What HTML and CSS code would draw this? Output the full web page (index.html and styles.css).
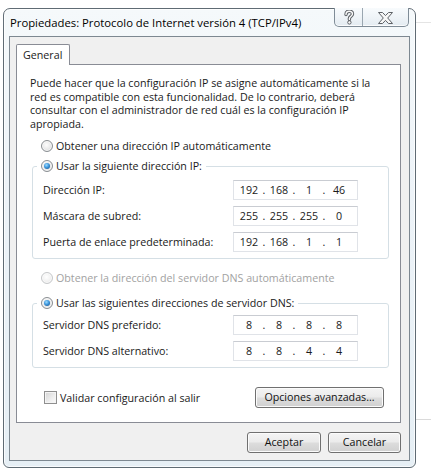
FILE: index.html
```html
<!DOCTYPE html>
<html lang="es">
<head>
<meta charset="utf-8">
<title>Propiedades: Protocolo de Internet versión 4 (TCP/IPv4)</title>
<link rel="stylesheet" href="styles.css">
</head>
<body>
<div class="screen">
  <div class="window">
    <div class="titlebar">
      <span class="title">Propiedades: Protocolo de Internet versión 4 (TCP/IPv4)</span>
      <div class="caption-btns">
        <span class="cap cap-help">
          <svg width="12" height="15" viewBox="0 0 12 15">
            <path d="M3 4.5 C3 2.2 4.6 1.2 6.2 1.2 C8.2 1.2 9.5 2.4 9.5 4 C9.5 6 6.4 6.4 6.4 8.6 L6.4 9.4" fill="none" stroke="#5d6166" stroke-width="3.4" stroke-linecap="round"/>
            <path d="M3 4.5 C3 2.2 4.6 1.2 6.2 1.2 C8.2 1.2 9.5 2.4 9.5 4 C9.5 6 6.4 6.4 6.4 8.6 L6.4 9.4" fill="none" stroke="#fafafa" stroke-width="1.4" stroke-linecap="round"/>
            <circle cx="6.4" cy="12.4" r="1.7" fill="#fafafa" stroke="#5d6166" stroke-width="1"/>
          </svg>
        </span>
        <span class="cap cap-close">
          <svg width="15" height="12" viewBox="0 0 15 12">
            <polygon points="0.5,0.5 4.5,0.5 7.5,3.6 10.5,0.5 14.5,0.5 9.7,6 14.5,11.5 10.5,11.5 7.5,8.4 4.5,11.5 0.5,11.5 5.3,6" fill="#f7f7f7" stroke="#5d6166" stroke-width="1" stroke-linejoin="round"/>
          </svg>
        </span>
      </div>
    </div>
    <div class="client">
      <div class="tabs"><div class="tab">General</div></div>
      <div class="panel">
        <p class="intro">Puede hacer que la configuración IP se asigne automáticamente si la<br>red es compatible con esta funcionalidad. De lo contrario, deberá<br>consultar con el administrador de red cuál es la configuración IP<br>apropiada.</p>
        <div class="opt opt-ip-auto"><span class="radio"></span><span>Obtener una dirección IP automáticamente</span></div>
        <fieldset class="group group-ip">
          <legend class="legend"><span class="radio radio-on"><span class="dot"></span></span><span>Usar la siguiente dirección IP:</span></legend>
          <div class="row"><span class="label">Dirección IP:</span><div class="ipbox"><span class="oct">192</span><span class="sep">.</span><span class="oct">168</span><span class="sep">.</span><span class="oct">1</span><span class="sep">.</span><span class="oct">46</span></div></div>
          <div class="row"><span class="label">Máscara de subred:</span><div class="ipbox"><span class="oct">255</span><span class="sep">.</span><span class="oct">255</span><span class="sep">.</span><span class="oct">255</span><span class="sep">.</span><span class="oct">0</span></div></div>
          <div class="row"><span class="label">Puerta de enlace predeterminada:</span><div class="ipbox"><span class="oct">192</span><span class="sep">.</span><span class="oct">168</span><span class="sep">.</span><span class="oct">1</span><span class="sep">.</span><span class="oct">1</span></div></div>
        </fieldset>
        <div class="opt opt-disabled"><span class="radio radio-disabled"></span><span>Obtener la dirección del servidor DNS automáticamente</span></div>
        <fieldset class="group group-dns">
          <legend class="legend"><span class="radio radio-on"><span class="dot"></span></span><span>Usar las siguientes direcciones de servidor DNS:</span></legend>
          <div class="row"><span class="label">Servidor DNS preferido:</span><div class="ipbox"><span class="oct">8</span><span class="sep">.</span><span class="oct">8</span><span class="sep">.</span><span class="oct">8</span><span class="sep">.</span><span class="oct">8</span></div></div>
          <div class="row"><span class="label">Servidor DNS alternativo:</span><div class="ipbox"><span class="oct">8</span><span class="sep">.</span><span class="oct">8</span><span class="sep">.</span><span class="oct">4</span><span class="sep">.</span><span class="oct">4</span></div></div>
        </fieldset>
        <div class="bottom-row">
          <div class="check"><span class="checkbox"></span><span>Validar configuración al salir</span></div>
          <button class="btn btn-adv" type="button">Opciones avanzadas...</button>
        </div>
      </div>
      <div class="actions">
        <button class="btn btn-ok" type="button">Aceptar</button>
        <button class="btn btn-cancel" type="button">Cancelar</button>
      </div>
    </div>
  </div>
</div>
</body>
</html>
```

FILE: styles.css
```css
* { box-sizing: border-box; }

html, body {
  margin: 0;
  padding: 0;
  background: #ffffff;
}

body {
  font-family: "Open Sans", "Noto Sans", sans-serif;
  font-size: 10.7px;
  color: #1a1a1a;
}

.screen {
  width: 431px;
  height: 470px;
  overflow: hidden;
  padding: 8px 0 0 3px;
  background:
    linear-gradient(#dadada, #dadada) no-repeat 416px 419px / 15px 1px,
    linear-gradient(#e4e4e4, #e4e4e4) no-repeat 416px 22px / 15px 1px,
    #ffffff;
}

.window {
  width: 413px;
  height: 460px;
  border: 1px solid #5f6b74;
  border-radius: 7px 7px 6px 6px;
  background: linear-gradient(180deg, #f5f9fb 0%, #edf3f8 40%, #e6eff5 100%);
  box-shadow: inset 0 0 0 1px rgba(255,255,255,0.75);
  display: flex;
  flex-direction: column;
}

.titlebar {
  height: 27px;
  display: flex;
  align-items: flex-start;
  justify-content: space-between;
  flex: none;
}

.title {
  padding: 6px 0 0 6px;
  line-height: 15px;
  font-size: 11.3px;
  color: #000;
  text-shadow: 0 0 6px #ffffff, 0 0 10px #ffffff, 0 0 14px #ffffff;
  white-space: nowrap;
}

.caption-btns {
  display: flex;
  margin: -1px 6px 0 0;
  height: 19px;
  border: 1px solid #7f8c97;
  border-top: none;
  border-radius: 0 0 5px 5px;
  background: linear-gradient(180deg, #f8fbfd 0%, #eef3f7 55%, #e3ebf1 100%);
  box-shadow: inset 0 -1px 0 rgba(255,255,255,0.8);
}

.cap {
  display: flex;
  align-items: center;
  justify-content: center;
}

.cap-help {
  width: 28px;
  border-right: 1px solid #9aa6b0;
  padding-top: 1px;
}

.cap-close {
  width: 45px;
  padding-top: 1px;
}

.client {
  flex: 1;
  margin: 0 5px 6px 5px;
  border: 1px solid #7d8891;
  background: #f0f0f0;
  padding: 7px 8px 0 6px;
  display: flex;
  flex-direction: column;
}

.tabs {
  display: flex;
  height: 20px;
  position: relative;
  z-index: 1;
}

.tab {
  width: 54px;
  height: 21px;
  border: 1px solid #898c95;
  border-bottom: none;
  background: #ffffff;
  padding: 3px 0 0 6px;
  line-height: 14px;
  border-radius: 2px 2px 0 0;
}

.panel {
  height: 359px;
  border: 1px solid #898c95;
  background: #ffffff;
  display: flex;
  flex-direction: column;
}

.intro {
  margin: 12px 0 0 13px;
  line-height: 13.5px;
  white-space: nowrap;
}

.opt {
  display: flex;
  align-items: center;
  height: 14px;
  margin-left: 24px;
  gap: 3px;
  line-height: 14px;
}

.opt-ip-auto { margin-top: 8px; }

.opt-disabled {
  margin-top: 12px;
  color: #a2a2a2;
}

.radio {
  width: 12px;
  height: 12px;
  flex: none;
  border-radius: 50%;
  border: 1px solid #8a8e92;
  background: radial-gradient(circle at 45% 40%, #fdfdfd 0%, #ececec 45%, #cfd2d5 100%);
  box-shadow: inset 0 0 0 1px rgba(255,255,255,0.7);
  display: flex;
  align-items: center;
  justify-content: center;
}

.radio-disabled {
  border-color: #c6c8ca;
  background: radial-gradient(circle at 45% 40%, #ffffff 0%, #f2f2f2 50%, #e2e3e4 100%);
}

.dot {
  width: 6px;
  height: 6px;
  border-radius: 50%;
  background: radial-gradient(circle at 40% 35%, #9edcff 0%, #3d97dd 45%, #12457a 100%);
}

.group {
  margin: 0 11px 0 15px;
  min-width: 0;
  border: 1px solid #d5dfe5;
  border-radius: 3px;
  padding: 7px 30px 6px 10px;
  display: flex;
  flex-direction: column;
  gap: 6px;
}

.group-ip { margin-top: 6px; }

.group-dns {
  margin-top: 11px;
  padding-top: 5px;
}

.legend {
  display: flex;
  align-items: center;
  gap: 3px;
  height: 14px;
  line-height: 14px;
  margin-left: -6px;
  padding: 0 4px;
}

.row {
  display: flex;
  align-items: center;
  height: 20px;
}

.label { white-space: nowrap; }

.ipbox {
  margin-left: auto;
  width: 125px;
  height: 20px;
  border: 1px solid #e0e3e8;
  border-top-color: #c9ccd2;
  background: #ffffff;
  display: flex;
  align-items: center;
  padding-left: 4px;
  line-height: 14px;
}

.oct {
  width: 22px;
  text-align: center;
}

.sep {
  width: 8px;
  text-align: center;
}

.bottom-row {
  margin: 19px 16px 0 27px;
  display: flex;
  align-items: center;
  justify-content: space-between;
  height: 21px;
}

.check {
  display: flex;
  align-items: center;
  gap: 3px;
  line-height: 14px;
}

.checkbox {
  width: 13px;
  height: 13px;
  border: 1px solid #8f8f8f;
  background: linear-gradient(135deg, #d4d4d4 0%, #eeeeee 60%, #fbfbfb 100%);
  box-shadow: inset 0 0 0 1px #f4f4f4;
}

.btn {
  font: inherit;
  color: #111;
  height: 21px;
  padding: 0;
  border: 1px solid #707070;
  border-radius: 3px;
  background: linear-gradient(180deg, #f4f4f4 0%, #ebebeb 48%, #dddddd 52%, #d0d0d0 100%);
  box-shadow: inset 0 0 0 1px #fbfbfb;
  line-height: 17px;
}

.btn-adv { width: 129px; }

.actions {
  margin-top: 9px;
  display: flex;
  justify-content: flex-end;
  gap: 7px;
}

.btn-ok { width: 74px; }
.btn-cancel { width: 73px; }
```
